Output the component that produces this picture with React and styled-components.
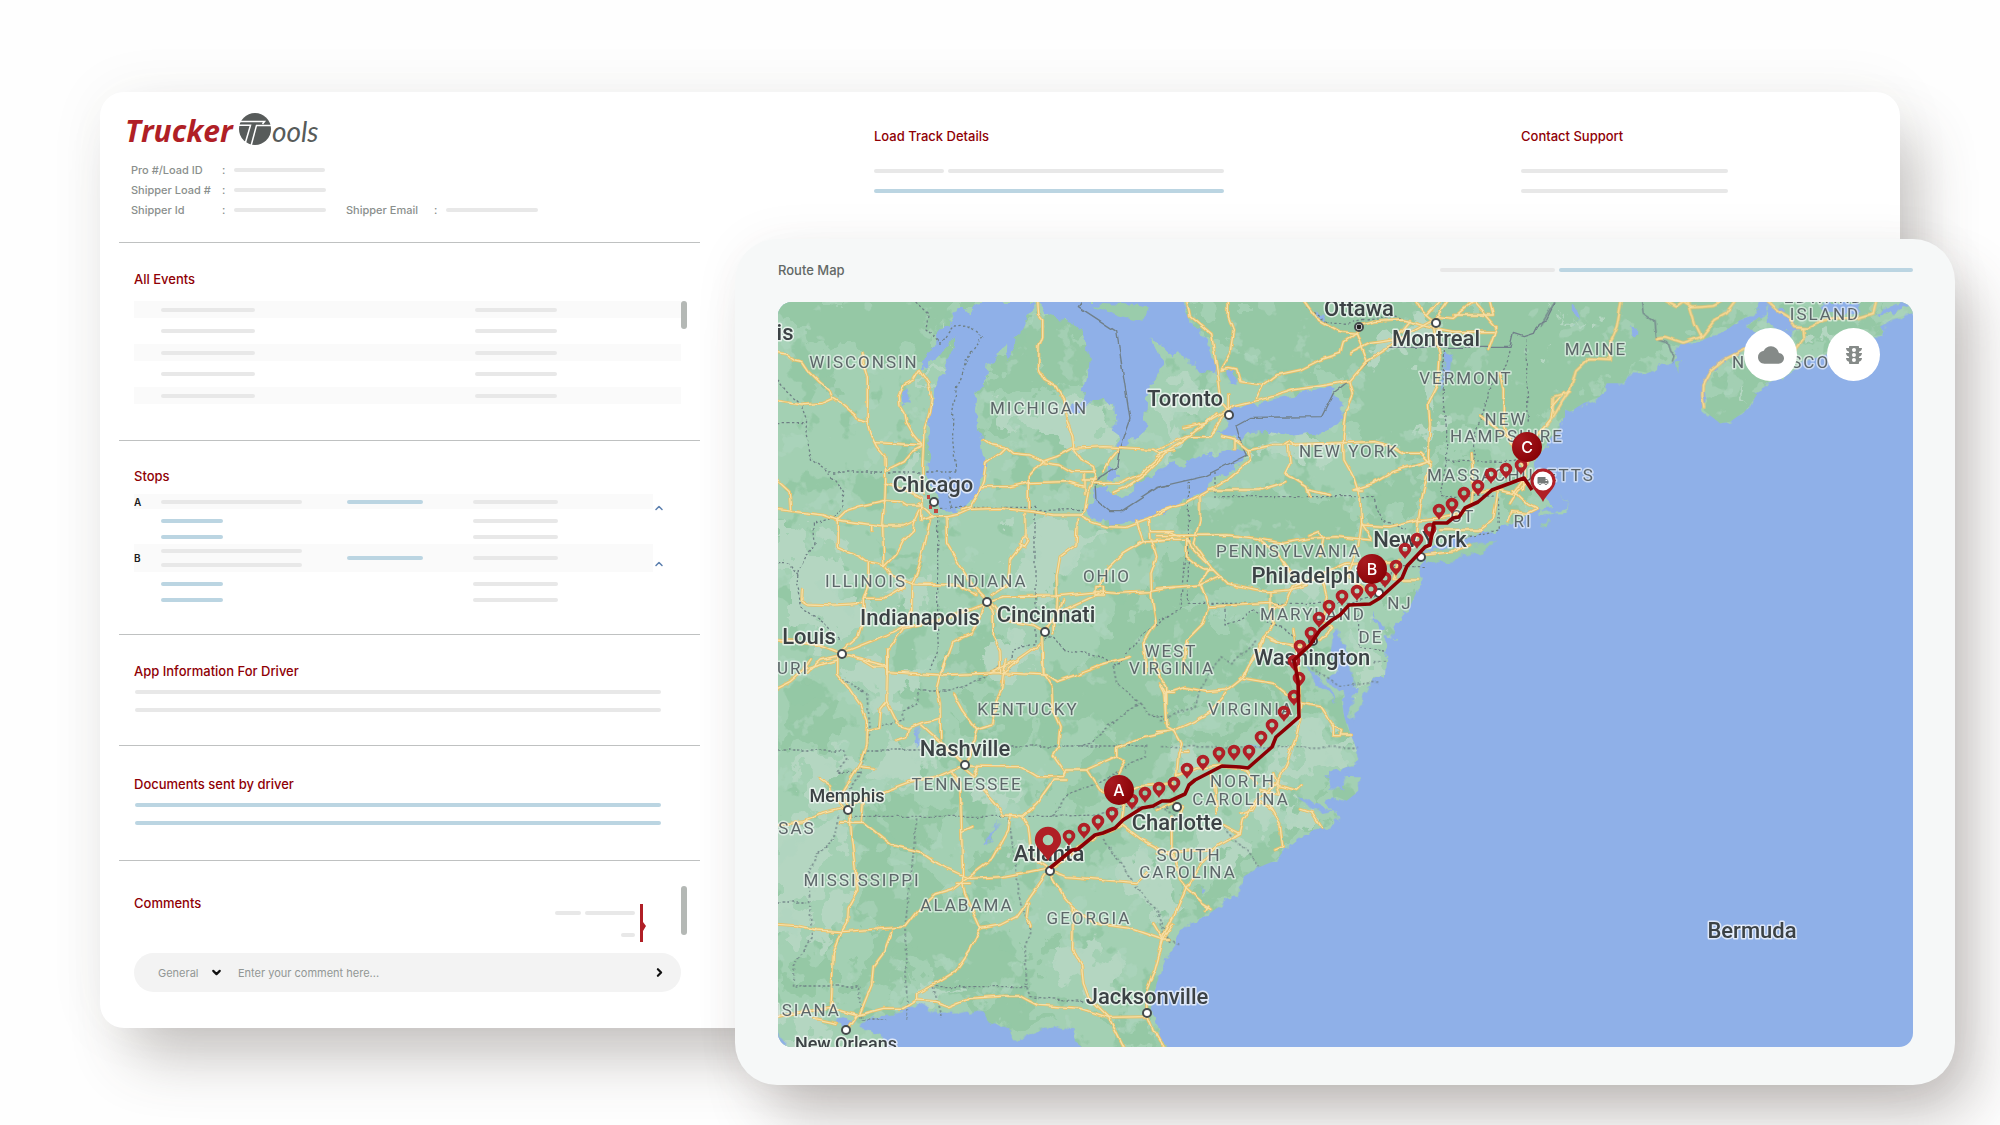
import React from 'react'
import styled, { createGlobalStyle } from 'styled-components'
import { MdCloud, MdTraffic, MdLocalShipping } from 'react-icons/md'
import { FiChevronUp, FiChevronDown, FiChevronRight } from 'react-icons/fi'

const GlobalStyle = createGlobalStyle`
    * {
        box-sizing: border-box;
    }
    body {
        margin: 0;
        background-color: #fefefe;
        font-family: Inter, "Liberation Sans", sans-serif;
    }
`

const Page = styled.div`
    min-height: 100vh;
    padding: 92px 45px 40px 100px;
    overflow: hidden;
    display: grid;
    grid-template-columns: 635fr 1165fr 55fr;
    grid-template-rows: 147px auto 57px;
    align-content: start;
`

const Dashboard = styled.main`
    grid-column: 1 / 3;
    grid-row: 1 / 3;
    display: grid;
    grid-template-columns: 635fr 1165fr;
    background-color: white;
    border-radius: 24px;
    box-shadow: 24px 36px 60px -8px rgba(74, 62, 56, 0.3), 0 0 60px rgba(74, 62, 56, 0.06);
`

const RouteCard = styled.section`
    grid-column: 2 / 4;
    grid-row: 2 / 4;
    padding: 0 42px 38px 43px;
    background-color: #f6f8f8;
    border-radius: 42px;
    box-shadow: 24px 36px 60px -8px rgba(74, 62, 56, 0.32), 0 0 50px rgba(74, 62, 56, 0.05);
`

const Left = styled.div`
    padding: 20px 35px 36px 19px;
`

const Brand = styled.header`
    padding: 0 0 22px 7px;
`

const Logo = styled.svg`
    display: block;
    width: 200px;
    height: 36px;
    margin-bottom: 12px;
    overflow: visible;
`

const MetaRow = styled.div`
    display: flex;
    align-items: center;
    height: 20px;
    padding-left: 5px;
    font-size: 11px;
    font-weight: 500;
    color: #8a8f8d;
`

const MetaLabel = styled.span`
    width: ${props => props.$width || "91px"};
`

const Colon = styled.span`
    width: 12px;
`

const Bar = styled.div`
    width: ${props => props.$width || "100%"};
    height: 4px;
    margin-right: ${props => props.$space || "0"};
    flex-shrink: 0;
    border-radius: 2px;
    background-color: ${props => props.$blue ? "#bbd5e2" : "#e8e8e8"};
`

const Section = styled.section`
    padding: ${props => props.$top || "26px"} 13px ${props => props.$bottom || "0"} 15px;
    border-top: 1px solid #bfc1c1;
`

const Title = styled.h2`
    margin: 0;
    font-size: 13px;
    line-height: 20px;
    font-weight: 500;
    color: #8f0005;
`

const Events = styled.div`
    display: flex;
    margin-top: 12px;
`

const EventList = styled.ul`
    flex: 1;
    margin: 0;
    padding: 0;
    list-style: none;
`

const EventRow = styled.li`
    display: grid;
    grid-template-columns: 314fr 206fr;
    align-items: center;
    height: 26px;
    padding-left: 27px;

    &:nth-child(odd) {
        height: 17px;
        background-color: #fafafa;
    }
`

const ScrollThumb = styled.div`
    width: 6px;
    height: ${props => props.$height};
    border-radius: 4px;
    background-color: #b4b8b5;
`

const Stops = styled.div`
    margin-top: 8px;
`

const StopHead = styled.div`
    display: flex;
    align-items: flex-start;
    height: ${props => props.$tall ? "28px" : "15px"};

    button {
        margin-top: ${props => props.$tall ? "14px" : "8px"};
    }
`

const StopBand = styled.div`
    width: 519px;
    height: 100%;
    display: grid;
    grid-template-columns: 27px 186px 126px 1fr;
    align-items: center;
    background-color: #fafafa;
    font-size: 10px;
    font-weight: 600;
    color: #1c1c1c;
`

const StopBody = styled.div`
    display: grid;
    grid-template-columns: 312px 1fr;
    row-gap: 12px;
    padding: 10px 0 5px 27px;
`

const Lines = styled.div`
    display: grid;
    row-gap: ${props => props.$gap || "14px"};
    margin-top: ${props => props.$top || "0"};
    padding: ${props => props.$inset ? "0 26px 0 1px" : "0"};
`

const ToggleButton = styled.button`
    display: flex;
    padding: 0;
    border: none;
    background: none;
    color: #5b7fae;
    cursor: pointer;
`

const CommentTop = styled.div`
    display: flex;
    align-items: flex-start;
    height: 67px;

    h2 {
        flex: 1;
        margin-top: 7px;
    }
`

const Thread = styled.div`
    display: flex;
    margin: 18px 35px 0 0;
`

const ThreadLines = styled.div`
    display: flex;
    flex-direction: column;
    align-items: flex-end;
    justify-content: space-between;
    padding: 7px 5px 5px 0;
`

const ThreadRow = styled.div`
    display: flex;
    gap: 4px;
`

const CommentForm = styled.form`
    display: flex;
    align-items: center;
    height: 39px;
    margin-right: 6px;
    padding: 0 15px 0 24px;
    border-radius: 20px;
    background-color: #f3f3f3;
`

const Select = styled.select`
    width: 52px;
    padding: 0;
    border: none;
    outline: none;
    appearance: none;
    background: none;
    font-family: inherit;
    font-size: 11px;
    color: #929795;
`

const Input = styled.input`
    flex: 1;
    min-width: 0;
    margin-left: 15px;
    padding: 0;
    border: none;
    outline: none;
    background: none;
    font-family: inherit;
    font-size: 11px;

    &::placeholder {
        color: #929795;
        opacity: 1;
    }
`

const SendButton = styled(ToggleButton)`
    color: #111;
`

const Summary = styled.div`
    display: grid;
    grid-template-columns: 647fr 379fr;
    align-content: start;
    padding: 34px 0 0 139px;
`

const SplitRow = styled.div`
    display: grid;
    grid-template-columns: ${props => props.$columns};
    column-gap: 4px;
`

const SummaryBlock = styled.div`
    width: ${props => props.$width};
`

const RouteHead = styled.div`
    display: flex;
    align-items: center;
    justify-content: space-between;
    height: 63px;
    padding-bottom: 2px;
`

const RouteTitle = styled.h2`
    margin: 0;
    font-size: 13px;
    line-height: 20px;
    font-weight: 500;
    color: #626866;
`

const MapBox = styled.div`
    position: relative;
    overflow: hidden;
    border-radius: 14px;
`

const MapSvg = styled.svg`
    display: block;
    width: 100%;
    height: auto;
    background-color: #8fb0e8;
    font-family: Roboto, "Liberation Sans", sans-serif;
`

const MapControls = styled.div`
    position: absolute;
    top: 26px;
    right: 33px;
    display: flex;
    gap: 30px;
`

const MapButton = styled.button`
    width: 53px;
    height: 53px;
    display: flex;
    align-items: center;
    justify-content: center;
    padding: 0;
    border: none;
    border-radius: 50%;
    background-color: white;
    color: #858a88;
    cursor: pointer;
`

const CityLabel = styled.text`
    font-size: ${props => props.$small ? "18px" : "22px"};
    font-weight: 500;
    fill: #3c4245;
    stroke: rgba(255, 255, 255, 0.7);
    stroke-width: 3px;
    stroke-linejoin: round;
    paint-order: stroke;
`

const StateLabel = styled.text`
    font-size: 17px;
    letter-spacing: 2px;
    fill: #5d6669;
    stroke: rgba(255, 255, 255, 0.55);
    stroke-width: 3px;
    stroke-linejoin: round;
    paint-order: stroke;
`

// The map is drawn in five tiles, each at three units to the pixel
const tiles = [
    {
        id: "nw",
        transform: "translate(770 290) scale(0.33333)",
        land: "M-60 -60H1215V1160H-60Z",
        water: [
            "M640 30L600 75L585 60L560 60L540 95L515 110L490 170L465 205L455 240L480 225L510 190L540 150L560 140L540 190L520 250L500 290L492 330L484 370L475 420L465 460L478 500L470 540L482 580L500 620L510 650L540 670L580 660L610 630L635 590L645 540L640 480L625 420L615 360L620 310L645 280L650 220L680 205L695 165L712 158L708 210L735 180L750 120L780 75L800 30Z",
            "M800 30L820 66L870 85L910 100L945 140L960 200L955 250L940 300L935 330L900 360L920 380L960 345L1000 322L1030 350L1035 420L1048 470L1075 465L1125 420L1128 330L1150 280L1175 230L1160 180L1135 140L1180 170L1215 205V30Z",
            "M1010 565L1015 530L1045 535L1050 560L1020 580Z",
            "M945 660L975 640L972 600L1000 585L1040 622L1090 602L1130 560L1215 515V655L1150 680L1110 690L1050 705L990 695L960 675Z",
            "M398 310L415 295L422 320L412 348L400 345Z",
        ],
        islands: ["M960 40L1060 45L1140 55L1115 95L1050 80L1010 65Z"],
        dark: [
            "M-10 0H620L540 90L470 170L400 160L330 200L240 160L150 180L100 110L-10 130Z",
            "M780 60L900 100L950 170L950 300L880 300L800 260L740 310L640 330L660 240L760 170Z",
            "M650 370L740 350L720 410L650 430Z",
            "M980 1000L1210 900V1160H900L1000 1080Z",
            "M540 1050L640 1010L680 1080L600 1150H540Z",
            "M130 250L200 290L160 310L110 280Z",
        ],
        light: [
            "M680 340L860 370L1000 320L1040 460L900 450L830 440L780 400L700 440Z",
            "M740 700L920 690L1000 740L880 850L830 920L740 900L720 800Z",
            "M24 720L120 720L190 780L250 870L270 1000L200 1060L100 980L24 1000Z",
            "M480 250L560 140L520 240L480 290Z",
            "M640 1090L760 1040L780 1150H660Z",
            "M400 480L460 500L450 600L400 560Z",
            "M360 900L460 880L520 960L430 980Z",
        ],
        borders: [
            "M24 270L50 305L95 345L110 385L108 430L125 510L165 540L195 570L222 610L215 650L190 685L130 700L135 760L85 840L80 890L95 950L160 1000L210 1050",
            "M175 546H558",
            "M24 398H105",
            "M440 36L475 70L468 120L510 160L550 108L590 105L638 140L590 210L560 290L548 370L548 450L558 546",
            "M540 560V652M510 652H795V662L945 658",
            "M503 680V1030L505 1080L480 1140",
            "M795 670V1060L730 1080L720 1140",
            "M24 818H55L85 855",
            "M825 1050L850 1040L880 1080L980 1095L1040 1130L1110 1040L1170 1000L1200 970",
        ],
        frontier: ["M935 36L925 50L1040 125L1080 385L1050 470L1040 530L975 575L978 630L1020 665H1055L1170 590L1200 585"],
        roads: [
            "M20 188L50 192L75 210L95 215L115 245L150 280L180 305L188 325L220 345L255 375L265 390L292 398L300 430L320 470L345 500L347 560L345 620L338 710L342 830",
            "M20 333L95 345L155 340L188 325",
            "M275 188L280 220L292 260V398",
            "M448 240L430 270L402 285L388 320L390 345L405 370L410 400L430 435L455 465",
            "M448 240L475 280L485 320L478 370L462 420L460 470L457 540L460 610",
            "M316 458L455 465M455 470L425 485L400 515L350 540",
            "M20 570L58 605L62 658M20 658L160 675L200 690L340 708H400L440 690",
            "M200 690L225 665L270 648L340 632L390 635L410 648H455",
            "M345 582L420 605L455 625V690L490 680",
            "M445 640L470 660L490 680M450 660L435 690",
            "M202 690V770L270 800L290 815L330 822L342 830",
            "M480 680H530L570 672L600 658L690 655L790 665L850 675H930",
            "M575 660L600 650L625 610L640 570L648 520L690 490L710 470",
            "M640 447L665 465L710 472L730 490L780 495L815 512",
            "M635 590H720L775 578L890 575L940 588",
            "M775 655V560L815 515L860 500L905 475L1000 470L1150 478L1170 490L1210 482",
            "M803 30L806 75L818 90V140L807 170L806 240L822 270L858 290L880 330L890 390L908 440L912 480L935 510L970 530L975 560L955 600L945 660L930 678",
            "M815 518L870 525L905 545H975M945 550V610M940 570H975",
            "M970 580H1050L1110 555L1170 500M1000 545L1020 510L1045 480M1030 607L1070 590L1130 550L1190 490",
            "M930 678L960 695L1010 710L1070 712L1130 690L1210 650",
            "M1100 695L1120 755H1160M1140 725H1210M1135 690L1140 755L1210 745",
            "M922 690L918 765L870 800L860 860L862 925L860 970L825 1025",
            "M1120 755L1060 790L1015 835L990 885M1145 750L1160 800L1143 850L1145 920L1158 1000L1120 1060L1130 1150",
            "M650 935L700 920L860 918L985 905L1040 910L1140 905L1210 892",
            "M528 680L530 760L560 810L610 890L645 925",
            "M765 670V738M755 765L720 810L715 880L665 915",
            "M480 690L470 740L455 800L440 850L425 882L560 885L620 915",
            "M342 830L365 855L425 882V960L400 1010L350 1035L225 1085",
            "M342 830L380 790L400 750L430 720L435 690",
            "M295 820V880L280 925V990L265 1040L220 1080",
            "M97 900L95 930L115 942L190 945L275 940",
            "M280 925H340L400 890",
            "M20 1050L150 1065L215 1090L350 1125V1150M215 1095L150 1110L110 1150",
            "M650 940L600 960L490 995L400 1015L350 1085V1140",
            "M645 940L605 1030L550 1055L515 1150",
            "M655 940L670 970V1040L690 1080L692 1150",
            "M660 935L700 990L790 1005L825 1025",
            "M860 970L880 930M870 965L990 910M815 1030L820 1150M810 1060L740 1110L660 1150M850 1030V1000",
            "M305 708V725",
            "M762 738L775 752L765 768L750 762L752 745Z",
            "M975 890H1003V915H975Z",
        ],
    },
    {
        id: "n",
        transform: "translate(1160 290) scale(0.33333)",
        land: "M-20 -60H1215V395L1175 440L1150 470L1120 520L1150 560L1130 600L1180 650L1110 660L1080 680L1060 700L1000 722L930 740L840 760L800 790L780 822L785 870L750 950L710 1010L700 1048L680 1040L640 960L655 1020L680 1080L675 1160H-20Z",
        water: [
            "M-5 30H70L90 100L130 140L150 190L165 215L170 255L130 240L90 225L50 180L-5 150Z",
            "M-5 545L40 530L110 505L150 492L230 480L258 492L240 520L165 565L120 610L60 640L-5 670Z",
            "M175 430L205 400L190 370L250 345L330 330L420 310L500 290L535 290L515 310L550 340L545 400L500 425L400 440L330 425L260 430L235 455L215 440Z",
            "M195 232L225 240L230 285L200 280Z",
            "M850 180L875 190L862 260L845 300L852 240Z",
            "M530 1010L545 1040L530 1090L550 1160H530L520 1080Z",
            "M470 60L500 90L490 100Z",
        ],
        islands: ["M790 795L850 778L930 762L1010 755L960 785L880 808L800 822Z", "M1150 700H1160V712H1150Z"],
        dark: [
            "M90 30H1210V230L1130 300L1100 420H900L880 500L800 520L700 500L640 440L570 400L560 330L600 280L560 270L420 230L300 240L240 180L180 160L130 100Z",
            "M90 640L250 620L560 620L640 680L600 740L520 800L400 860L260 880L130 860L60 960L-10 1040V820L60 740Z",
            "M620 560L780 540L780 620L700 650L620 600Z",
            "M-10 980L120 960L180 1000L100 1150H-10Z",
            "M860 530L920 520L900 640L850 600Z",
            "M700 930L760 880L740 960L700 1000Z",
            "M1080 560L1140 580L1100 660L1040 690L1020 620Z",
        ],
        light: [
            "M100 270L180 300L170 360L80 380L20 420L-10 460V340Z",
            "M270 440L380 430L560 450L540 490L450 500L290 490Z",
            "M700 100L830 110L820 160L760 170L700 210L650 240L620 220Z",
            "M420 860L500 830L620 840L560 910L480 930L420 930Z",
            "M590 1000L640 1050L675 1100V1160H600L580 1080Z",
            "M800 300L840 320L830 440L800 480Z",
            "M0 420L80 430L50 480L0 510Z",
        ],
        borders: [
            "M165 545V620H640L650 650L670 690L740 720",
            "M85 575V940H570L640 920L690 860L700 830H800",
            "M850 180V340L860 420V510L1060 515L1100 500",
            "M1097 150L1105 400M1050 180L1040 220L995 280L975 350L945 430L942 510",
            "M860 510L840 620L1015 618L1018 720L900 745",
            "M195 945V1005L240 990L280 960L340 1000L380 1020L420 1060L480 1120",
            "M595 960L597 1070L675 1080",
            "M85 760L70 850L60 960L0 990",
            "M440 50L500 95L560 100L620 90L700 80L800 110",
        ],
        frontier: ["M-10 592L130 560L260 495L240 450L228 405L270 382L485 380L520 310L570 270L640 200L690 172H1050L1060 130L1090 140L1120 130L1135 100L1160 90L1185 40"],
        roads: [
            "M80 30L90 80L155 135L165 200L175 260L185 340L205 365",
            "M205 30V80L220 120L210 190L180 240L205 235L230 240L240 275L310 285L350 255L420 240L480 210L540 190L550 155L598 120",
            "M-10 500L60 460L110 420L160 385L220 350L320 325L400 300L500 285L570 272L620 215L690 170L730 140L820 90",
            "M-10 480L80 440L150 440L200 360M70 415L140 400L170 370M205 310V370M310 285L290 325",
            "M430 30L470 85L540 125L590 130L620 210",
            "M570 190L630 160L700 150L750 90M590 110L640 95L730 90L800 110L880 125H1000",
            "M765 30L790 70L820 95L865 30M840 30L800 75M820 95L840 200L835 280L805 340L810 400L805 500L810 530L790 600L775 690L770 740",
            "M830 80L880 85L940 36L1010 115M880 75H1000L990 36M1010 110L985 180",
            "M180 440L225 450L265 480L340 465L450 462L640 455L700 470L730 490H780L810 520M225 450V475M370 465L390 450L410 468",
            "M265 480L270 510L200 570L150 600L80 640L-10 665",
            "M570 275L580 310L560 360L550 440L552 510L580 560L600 620L605 700L595 770",
            "M385 465L390 520L375 550L440 590L450 620",
            "M810 510L700 545L640 580L580 600H610",
            "M145 600H300L380 575M445 600L510 615",
            "M120 620V690L100 760L150 830L120 880L145 950L130 1000L80 1050L70 1150",
            "M-10 725H20L60 740M-10 737L200 735L290 745L370 760L450 745L530 740L635 750",
            "M-10 748H80L100 780L180 860L200 880L320 905L390 900L440 885",
            "M-10 895L120 885L180 860M80 745V800L130 840H160",
            "M605 705L690 710L770 690L830 685L900 670L935 640L940 580L935 490",
            "M605 700L635 745M450 735L475 725L490 745L480 800",
            "M290 745L350 790L400 860",
            "M145 950L330 940L370 950M330 905V960L345 1000L310 1040L255 1150M330 960L380 940L400 890L490 850L560 820L700 815",
            "M840 720H960L1000 690L1015 600M790 795L880 785L930 765",
            "M1050 640L1075 600L1100 580M1060 600L1100 640L1130 655L1100 670L1055 665L1045 690M940 610L1015 600L1060 610L1090 570",
            "M1020 250L1030 300V400L1060 480L1095 530L1090 600",
            "M960 380L1000 410L1040 440M1210 310L1175 350L1170 390L1130 440L1105 520",
            "M485 860L500 920L490 980M320 1040L360 1060L440 1070M490 1000L520 1010L480 1050M720 810L700 870H775M590 770L560 860L620 900",
        ],
    },
    {
        id: "ne",
        transform: "translate(1540 230) scale(0.33333)",
        land: "M-50 100H690L660 240L600 270L560 300L500 325L420 345L400 395L370 400L330 430L280 420L250 460L200 460L180 500L130 520L90 545L60 530L40 570L10 620L-50 700ZM690 235L620 290L640 305L700 300L770 300L745 340L610 360L560 390L510 430L490 480L490 540L540 580L570 575L620 540L660 480L700 450L760 430L780 400L870 370L960 320L1035 315L1020 290L1060 265L1130 250V100H690ZM0 790L10 845L40 850L75 835L80 820L60 790L80 815V850L40 850L5 865Z",
        water: [
            "M860 216H960L950 250L880 250L840 235Z",
            "M690 225L750 260L780 300L720 300L680 280Z",
            "M1010 250L1080 216L1120 210L1060 250Z",
            "M100 230L115 245L110 275L95 250Z",
            "M270 295L300 300L300 315L280 320Z",
        ],
        islands: ["M405 400H425L410 418Z"],
        dark: [
            "M-50 100H690L640 240L560 290L480 320L400 360L300 420L180 460L90 540L-50 600Z",
            "M520 430L700 370L700 440L620 540L560 575L490 540Z",
            "M640 300L700 290L800 350L960 300L1060 230L960 260L800 216Z",
        ],
        light: [
            "M90 260L60 290L50 275Z",
            "M150 270L175 280L150 305Z",
            "M800 300L870 290L860 330L790 340Z",
            "M590 490L640 460L600 510Z",
            "M0 380L30 360L20 400Z",
        ],
        borders: [],
        frontier: ["M305 216L310 250L345 275L350 325L380 335L390 365L405 380L400 398", "M45 216L0 290"],
        roads: [
            "M245 210L230 290L212 330V388L145 385L108 420L90 480L70 510L40 560L0 610",
            "M90 485L40 500L38 550",
            "M350 325L375 320L430 338L485 320L525 270L560 250L590 210",
            "M375 210L410 228L430 214L455 230L520 225L550 210M450 230L465 280L485 320",
            "M680 210L720 245L745 260L765 292L800 295L850 270L950 265L1000 250L1010 210",
            "M787 295L790 330L770 355M620 355L560 385L510 425L488 465L487 500L492 535",
        ],
    },
    {
        id: "sw",
        transform: "translate(770 660) scale(0.33333)",
        land: "M-60 -40H1215V850L1200 870L1175 930L1160 970L1150 1010L1140 1060L1165 1100L1195 1180H-60Z",
        water: [
            "M270 1100L300 1070L400 1052L440 1030L500 1060L560 1060L620 1050L660 1090L710 1105L740 1140L800 1120L850 1090L900 1110L945 1180H370L330 1130Z",
            "M195 1080L240 1065L258 1085L220 1105Z",
            "M-10 1110L30 1120L60 1180H-10Z",
            "M640 550L690 480L680 500L650 555Z",
            "M440 200L450 240L440 260Z",
        ],
        islands: [],
        dark: [
            "M40 110L140 90L230 170L220 240L120 260L40 200Z",
            "M860 80L1000 20L1210 40V460L1060 420L950 460L860 450L900 340L1040 240L960 180L880 160Z",
            "M540 140L700 110L820 200L760 250L640 230Z",
            "M320 530L420 600L540 680L500 800L420 900L360 1000L260 980L300 820L260 650Z",
            "M500 720L650 800L740 900L760 970H520L460 900L400 960L420 800Z",
            "M620 540L740 600L700 700L620 650Z",
            "M330 400L440 420L540 460L460 540L380 520Z",
            "M24 1000L180 1000L240 960L200 850L100 900L24 940Z",
            "M780 820L900 820L880 880L780 900Z",
            "M520 1000L760 1000L860 1080L740 1130L640 1060Z",
            "M1000 1060L1130 1080L1170 1160H1080Z",
        ],
        light: [
            "M60 270L260 280L210 400L200 560L120 700L90 860L24 820V520L140 460Z",
            "M240 20L480 20L420 130L360 180L290 110Z",
            "M360 240L500 260L500 340L340 370L300 300Z",
            "M840 870L1020 850L1080 960L1000 1020L880 990Z",
            "M1060 560L1210 600V740L1100 700Z",
            "M700 540L760 560L740 620L700 600Z",
            "M430 960L480 940L560 1000L460 1010Z",
            "M620 380L760 350L700 440L620 440Z",
            "M160 700L230 720L190 860L140 840Z",
            "M60 1080L200 1110L180 1160H60Z",
        ],
        borders: [
            "M24 270H220L230 300L200 337H270M290 270H440L720 258H1130L1125 290L1070 320L980 370L880 410L850 468",
            "M240 469H850L980 465L1060 440L1200 445",
            "M440 475L420 680L405 800L412 1085",
            "M715 475L735 600L750 720L782 810L765 860L770 980L780 1010L940 1025",
            "M770 980H490L515 1075",
            "M24 726H110",
            "M205 470L190 540L140 580L115 650L125 830L70 920L68 978H265L275 1080H350",
            "M205 50L290 100L300 200L270 340L230 400",
            "M320 200L400 180L400 150L440 130L450 90L540 90L600 70L640 50L690 20",
            "M1030 20L1040 70L1110 130L1060 160L960 250L920 260M1110 130L1140 170L1200 165",
            "M1000 540L1100 680L1160 750L1200 850",
        ],
        frontier: [],
        roads: [
            "M20 85L60 65L100 30L120 0M100 30L200 0",
            "M200 -10V40L240 90L275 140L290 180L288 250L270 310L240 360L215 400L235 440",
            "M350 -30L352 35L510 45L690 38L830 45L860 65L920 45L1000 15L1080 -10M280 0L310 18H350M352 -10V30L350 125L330 150L325 205L290 215",
            "M350 125L385 195L415 205L450 190L510 175M415 205L410 230L378 240M450 190L500 235L560 290L585 315",
            "M530 -10L510 45L500 80L510 130L512 235",
            "M550 100L580 155L620 210L665 195L680 120L695 90L700 40L745 0M700 40L710 0M620 210L600 290L585 315",
            "M820 -20L822 45L845 80L848 150L870 200L865 260L850 285L885 335",
            "M235 440L160 460L100 485L20 495M235 440L340 395L420 365L500 350L545 330L585 318",
            "M585 318L690 320H750L800 350H880L890 330H950L1040 290V265L1120 230L1210 210",
            "M625 320L610 350L585 330M540 330L570 370L572 420L575 520L578 660",
            "M640 390L680 435L700 465L760 468L800 430L850 360L890 360",
            "M720 470L715 510L665 600L585 660L545 690L495 705L440 755L405 800L350 805L215 815L140 810L80 797L20 793",
            "M755 470L775 500L785 590L830 620M575 515L608 500",
            "M240 450L245 540L255 620L262 690L232 745L230 790L215 815L190 880L187 960L183 1045",
            "M210 487H280L365 555L450 575L500 610L575 645L600 655L700 650L830 625",
            "M280 430L275 485M150 355L180 375L185 405L215 440M270 320L312 325",
            "M560 670H600M578 665L585 700L632 805L600 870L555 935L490 975L440 1000V1020L500 1025L540 1040L600 1015L700 1008H750L800 1035L930 1045L1015 1072L1130 1070",
            "M632 805L690 795L740 770L775 720L830 640M775 730L770 770L782 800",
            "M840 640L880 710L910 745L908 870L935 920L940 970L955 1010L1015 1070L1065 1170",
            "M840 630L890 650L1100 668L1130 640M910 745L975 790L1080 805L1180 840L1210 790",
            "M1180 840L1155 930L1130 990V1060L1150 1110L1190 1170",
            "M440 1020L400 1045H340L265 1065L240 1100M20 1070L100 1055L180 1045L260 1065M365 815L340 880L310 920L305 975L270 1060M130 1075L200 1090",
            "M840 630L960 540L1050 500L1060 430M1050 490L1110 535L1210 590",
            "M950 330L990 390L1040 410L1100 380L1210 370",
            "M1150 -10L1170 50L1190 80V190M1040 290L1065 300L1045 340M1190 100H1210",
        ],
    },
    {
        id: "s",
        transform: "translate(1160 640) scale(0.33333)",
        land: "M-20 -30H675V50L640 110L610 170L580 240L570 220L590 150L580 120L560 150L545 180L550 220L560 255L575 290L590 330L600 370L560 380L500 405L540 410L600 412V450L560 482L530 470L500 480L540 540L500 560L440 580L380 620L350 660L300 680L250 710L230 760L190 790L150 820L90 850L50 890L30 930L0 960V1010H-20Z",
        water: [
            "M520 -20L510 50L540 100L500 110L550 170L580 150L570 60L560 40L540 -20Z",
            "M440 80L500 130L530 190L480 140Z",
            "M500 405L560 400L540 440L560 455L510 445Z",
            "M410 470L470 490L520 510L490 520L440 495Z",
            "M250 310L330 330L290 325Z",
            "M130 740L145 745L135 760Z",
        ],
        islands: ["M-10 1170L20 1225H-10Z"],
        dark: [
            "M-20 -30H260L200 100L60 190L-20 230Z",
            "M280 60L400 90L480 200L400 260L340 200L260 180Z",
            "M60 240L280 260L240 310L60 310Z",
            "M380 560L480 540L420 590L360 640L300 660Z",
            "M260 600L330 560L350 640L280 680L230 690L220 760L150 800L100 740Z",
            "M460 440L520 480L480 500Z",
        ],
        light: [
            "M430 220L520 290L590 330L540 380L440 390L360 430L330 540L260 540L300 430L400 330Z",
            "M80 560L220 550L250 640L160 700L90 660Z",
            "M600 20L670 20L630 100L590 200L580 100Z",
            "M0 740L60 760L30 860L0 880Z",
            "M50 330L120 340L100 400L50 400Z",
            "M400 480L460 520L440 580L390 560Z",
        ],
        borders: [
            "M0 320L590 322",
            "M0 505L60 530L100 540M190 560L300 680",
            "M0 240L105 200L120 150L180 50L215 75L290 0",
            "M455 85L540 140L660 125M640 65H675",
            "M0 850L15 890L60 915",
        ],
        frontier: [],
        roads: [
            "M15 160L75 142L140 155L200 150L250 110L300 20L310 -10",
            "M0 130L15 160L22 260L45 275L65 310L55 340L50 410",
            "M-10 275L45 270L100 245L150 215L200 160M60 335H85",
            "M250 115L340 130L390 170L425 190L480 200L520 260L545 270L540 290H520V255M545 285H575",
            "M425 190L420 240L405 300L380 370L350 430L290 480L250 540L240 580L170 620L130 660L80 740L40 830L10 890L0 930",
            "M50 410L110 385L180 378L260 390L290 430M330 430L410 450L425 435M340 400L360 460L300 450",
            "M-10 510L35 490L70 500L60 520",
            "M150 400L165 440L170 520M330 500L360 550L368 620L345 630M420 505L455 515L485 562",
            "M290 480L335 510M190 555L240 580M240 520L280 510L290 490",
            "M35 530V620L60 720L80 745L130 790L155 805M135 810L150 795",
            "M-10 640L100 632L165 625M-20 850L10 900H28",
            "M-10 1180L15 1225",
            "M330 0L400 20M400 -30L415 60L420 190",
        ],
    },
]

const cities = [
    { name: "Chicago", x: 933, y: 492, dot: [934, 502] },
    { name: "Indianapolis", x: 920, y: 625, dot: [987, 602] },
    { name: "Cincinnati", x: 1046, y: 622, dot: [1045, 632] },
    { name: "Louis", x: 809, y: 644, dot: [842, 654] },
    { name: "Toronto", x: 1185, y: 406, dot: [1229, 415] },
    { name: "Ottawa", x: 1359, y: 316, dot: [1359, 327], capital: true },
    { name: "Montreal", x: 1436, y: 346, dot: [1436, 323] },
    { name: "New York", x: 1420, y: 547, dot: [1421, 557] },
    { name: "Philadelphia", x: 1312, y: 583, dot: [1379, 593] },
    { name: "Washington", x: 1312, y: 665, dot: [1313, 641], capital: true },
    { name: "Nashville", x: 965, y: 756, dot: [965, 765] },
    { name: "Memphis", x: 847, y: 802, dot: [848, 810], small: true },
    { name: "Atlanta", x: 1049, y: 861, dot: [1050, 871] },
    { name: "Charlotte", x: 1177, y: 830, dot: [1177, 807] },
    { name: "Jacksonville", x: 1147, y: 1004, dot: [1147, 1013] },
    { name: "New Orleans", x: 846, y: 1050, dot: [846, 1030], small: true },
    { name: "Bermuda", x: 1752, y: 938 },
    { name: "is", x: 785, y: 340 },
]

const states = [
    ["WISCONSIN", 864, 368],
    ["MICHIGAN", 1039, 414],
    ["ILLINOIS", 866, 587],
    ["INDIANA", 987, 587],
    ["OHIO", 1107, 582],
    ["WEST", 1171, 657],
    ["VIRGINIA", 1172, 674],
    ["URI", 793, 674],
    ["KENTUCKY", 1028, 715],
    ["TENNESSEE", 967, 790],
    ["SAS", 797, 834],
    ["MISSISSIPPI", 862, 886],
    ["ALABAMA", 967, 911],
    ["GEORGIA", 1089, 924],
    ["ISIANA", 808, 1016],
    ["NEW YORK", 1349, 457],
    ["VERMONT", 1466, 384],
    ["NEW", 1506, 425],
    ["HAMPSHIRE", 1507, 442],
    ["MASSACHUSETTS", 1511, 481],
    ["CT", 1463, 522],
    ["RI", 1523, 527],
    ["PENNSYLVANIA", 1289, 557],
    ["MARYLAND", 1313, 620],
    ["NJ", 1400, 609],
    ["DE", 1371, 643],
    ["VIRGINIA", 1251, 715],
    ["NORTH", 1243, 787],
    ["CAROLINA", 1241, 805],
    ["SOUTH", 1189, 861],
    ["CAROLINA", 1188, 878],
    ["MAINE", 1596, 355],
    ["EDWARD", 1824, 303],
    ["ISLAND", 1825, 320],
    ["NOVA SCOTIA", 1797, 368],
]

const route = "1050,868 1072,850 1078,849 1095,835 1103,833 1115,828 1123,820 1142,808 1153,806 1162,801 1170,801 1185,794 1189,785 1195,780 1222,766 1240,767 1248,768 1272,747 1276,737 1299,717 1298,680 1294,660 1310,645 1320,630 1332,620 1340,615 1349,605 1370,604 1380,598 1402,578 1407,566 1425,547 1430,545 1434,523 1447,523 1453,518 1459,517 1465,508 1478,502 1492,490 1524,478 1532,490"

const pings = [
    [1069, 836], [1084, 829], [1098, 821], [1112, 813], [1132, 800], [1145, 793], [1159, 788],
    [1174, 783], [1187, 769], [1203, 761], [1219, 753], [1234, 751], [1249, 751], [1261, 737],
    [1272, 725], [1284, 712], [1294, 696], [1299, 678], [1294, 661], [1300, 646], [1311, 633],
    [1319, 618], [1329, 606], [1342, 596], [1357, 591], [1371, 589], [1385, 578], [1396, 566],
    [1405, 549], [1417, 539], [1430, 529], [1439, 510], [1452, 504], [1464, 493], [1478, 486],
    [1491, 474], [1506, 469], [1521, 465],
]

const stopBadges = [
    ["A", 1119, 790],
    ["B", 1372, 569],
    ["C", 1527, 447],
]

const Shapes = ({ kind, ...rest }) => (
    <g {...rest}>
        {tiles.map(tile => (
            <g key={tile.id} transform={tile.transform}>
                {[].concat(tile[kind]).map(d => <path key={d} d={d} />)}
            </g>
        ))}
    </g>
)

const Pin = ({ x, y, scale = 1 }) => (
    <path
        transform={`translate(${x} ${y}) scale(${scale})`}
        fill="#b01f26"
        fillRule="evenodd"
        d="M0 9.5C-1.4 6.5-6 3.6-6 0A6 6 0 1 1 6 0C6 3.6 1.4 6.5 0 9.5ZM0-2.4A2.4 2.4 0 1 0 0 2.4A2.4 2.4 0 1 0 0-2.4Z"
    />
)

const RouteMap = () => (
    <MapSvg viewBox="778 302 1135 745" role="img" aria-label="Route map">
        <defs>
            <filter id="coast" filterUnits="userSpaceOnUse" x="760" y="280" width="1180" height="790" colorInterpolationFilters="sRGB">
                <feTurbulence type="fractalNoise" baseFrequency="0.09" numOctaves="3" seed="4" />
                <feDisplacementMap in="SourceGraphic" scale="12" xChannelSelector="R" yChannelSelector="G" />
            </filter>
            <filter id="rough" filterUnits="userSpaceOnUse" x="760" y="280" width="1180" height="790" colorInterpolationFilters="sRGB">
                <feTurbulence type="fractalNoise" baseFrequency="0.035" numOctaves="4" seed="9" />
                <feDisplacementMap in="SourceGraphic" scale="70" xChannelSelector="R" yChannelSelector="G" />
            </filter>
            <filter id="wiggle" filterUnits="userSpaceOnUse" x="760" y="280" width="1180" height="790" colorInterpolationFilters="sRGB">
                <feTurbulence type="fractalNoise" baseFrequency="0.07" numOctaves="2" seed="2" />
                <feDisplacementMap in="SourceGraphic" scale="5" xChannelSelector="R" yChannelSelector="G" />
            </filter>
            <filter id="speckle" filterUnits="userSpaceOnUse" x="760" y="280" width="1180" height="790" colorInterpolationFilters="sRGB">
                <feTurbulence type="fractalNoise" baseFrequency="0.035" numOctaves="4" seed="21" />
                <feColorMatrix values="0 0 0 0 0.69  0 0 0 0 0.835  0 0 0 0 0.75  20 0 0 0 -12.8" />
            </filter>
            <filter id="woods" filterUnits="userSpaceOnUse" x="760" y="280" width="1180" height="790" colorInterpolationFilters="sRGB">
                <feTurbulence type="fractalNoise" baseFrequency="0.028" numOctaves="4" seed="33" />
                <feColorMatrix values="0 0 0 0 0.58  0 0 0 0 0.784  0 0 0 0 0.647  22 0 0 0 -13" />
            </filter>
            <clipPath id="landClip">
                {tiles.map(tile => <path key={tile.id} d={tile.land} transform={tile.transform} />)}
            </clipPath>
            <radialGradient id="badge" cx="0.25" cy="0.25" r="0.9">
                <stop offset="0" stopColor="#a81a20" />
                <stop offset="1" stopColor="#870004" />
            </radialGradient>
        </defs>
        <g filter="url(#coast)">
            <Shapes kind="land" fill="#a3d0b3" />
        </g>
        <g clipPath="url(#landClip)">
            <rect x="778" y="302" width="1135" height="745" filter="url(#woods)" />
            <Shapes kind="dark" fill="#95c8a5" filter="url(#rough)" />
            <Shapes kind="light" fill="#b4d6c1" filter="url(#rough)" />
            <rect x="778" y="302" width="1135" height="745" filter="url(#speckle)" opacity="0.55" />
        </g>
        <g filter="url(#coast)">
            <Shapes kind="water" fill="#8fb0e8" />
            <Shapes kind="islands" fill="#9accab" />
        </g>
        <g filter="url(#wiggle)" fill="none" strokeLinejoin="round">
            <Shapes kind="borders" stroke="#6f8085" strokeWidth="4" strokeDasharray="7 7" />
            <Shapes kind="frontier" stroke="#71808a" strokeWidth="4" />
            <Shapes kind="roads" stroke="#e8c069" strokeWidth="9" strokeLinecap="round" />
            <Shapes kind="roads" stroke="#f5dfa6" strokeWidth="4" strokeLinecap="round" />
        </g>
        <g fill="#c2453f">
            <rect x="927" y="495" width="3" height="4" />
            <rect x="931" y="498" width="3" height="3" />
            <rect x="929" y="505" width="3" height="4" />
            <rect x="934" y="509" width="4" height="4" />
        </g>
        {cities.filter(city => city.dot).map(city => (
            <g key={city.name} transform={`translate(${city.dot[0]} ${city.dot[1]})`}>
                <circle r="4" fill="white" stroke="#454b4d" strokeWidth="2" />
                {city.capital && <circle r="2.4" fill="#222" />}
            </g>
        ))}
        <g textAnchor="middle">
            {states.map(([name, x, y]) => <StateLabel key={`${name}-${y}`} x={x} y={y}>{name}</StateLabel>)}
            {cities.map(city => (
                <CityLabel key={city.name} x={city.x} y={city.y} $small={city.small}>{city.name}</CityLabel>
            ))}
        </g>
        {pings.map(([x, y]) => <Pin key={`${x}-${y}`} x={x} y={y} scale={1.05} />)}
        <Pin x={1048} y={840} scale={2.2} />
        <polyline points={route} fill="none" stroke="#8b0004" strokeWidth="3.6" strokeLinejoin="round" />
        <path transform="translate(1543 481) scale(2.1)" fill="#b01f26" d="M0 10C-1.4 6.5-6 3.6-6 0A6 6 0 1 1 6 0C6 3.6 1.4 6.5 0 10Z" />
        <circle cx="1543" cy="481" r="9.5" fill="white" />
        <MdLocalShipping x="1537" y="475" size="12" color="#757b79" />
        {stopBadges.map(([name, x, y]) => (
            <g key={name} transform={`translate(${x} ${y})`}>
                <circle r="15" fill="url(#badge)" />
                <text y="6" fontSize="16" fontFamily="Inter, sans-serif" fontWeight="500" fill="white" textAnchor="middle">{name}</text>
            </g>
        ))}
    </MapSvg>
)

const TruckerLogo = () => (
    <Logo viewBox="126 112 200 36" role="img" aria-label="Trucker Tools">
        <text x="125" y="142" fontFamily="Open Sans, sans-serif" fontSize="30" fontWeight="700" fontStyle="italic" fill="#b01f26">Trucker</text>
        <circle cx="255" cy="129" r="16" fill="#575b5a" />
        <path d="M240 121.6H264.5L262.5 124M238.5 125.2H250.5L245 144M271 125.4H256.5L251 146" fill="none" stroke="white" strokeWidth="1.5" />
        <text x="272" y="142" fontFamily="Lato, sans-serif" fontSize="28" fontWeight="400" fontStyle="italic" fill="#575b5a">ools</text>
    </Logo>
)

const App = () => {
  return (
      <Page>
          <GlobalStyle />

          <Dashboard>
              <Left>
                  <Brand>
                      <TruckerLogo />
                      <MetaRow>
                          <MetaLabel>Pro #/Load ID</MetaLabel><Colon>:</Colon><Bar $width="91px" />
                      </MetaRow>
                      <MetaRow>
                          <MetaLabel>Shipper Load #</MetaLabel><Colon>:</Colon><Bar $width="92px" />
                      </MetaRow>
                      <MetaRow>
                          <MetaLabel>Shipper Id</MetaLabel><Colon>:</Colon><Bar $width="92px" $space="20px" />
                          <MetaLabel $width="88px">Shipper Email</MetaLabel><Colon>:</Colon><Bar $width="92px" />
                      </MetaRow>
                  </Brand>

                  <Section $bottom="36px">
                      <Title>All Events</Title>
                      <Events>
                          <EventList>
                              {[1, 2, 3, 4, 5].map(row => (
                                  <EventRow key={row}>
                                      <Bar $width="94px" />
                                      <Bar $width="82px" />
                                  </EventRow>
                              ))}
                          </EventList>
                          <ScrollThumb $height="28px" />
                      </Events>
                  </Section>

                  <Section $top="25px" $bottom="27px">
                      <Title>Stops</Title>
                      <Stops>
                          <StopHead>
                              <StopBand>
                                  A
                                  <Bar $width="141px" />
                                  <Bar $blue $width="76px" />
                                  <Bar $width="85px" />
                              </StopBand>
                              <ToggleButton type="button" aria-label="Collapse stop A"><FiChevronUp size="12" strokeWidth="3" /></ToggleButton>
                          </StopHead>
                          <StopBody>
                              <Bar $blue $width="62px" />
                              <Bar $width="85px" />
                              <Bar $blue $width="62px" />
                              <Bar $width="85px" />
                          </StopBody>
                          <StopHead $tall>
                              <StopBand>
                                  B
                                  <Lines $gap="10px">
                                      <Bar $width="141px" />
                                      <Bar $width="141px" />
                                  </Lines>
                                  <Bar $blue $width="76px" />
                                  <Bar $width="85px" />
                              </StopBand>
                              <ToggleButton type="button" aria-label="Collapse stop B"><FiChevronUp size="12" strokeWidth="3" /></ToggleButton>
                          </StopHead>
                          <StopBody>
                              <Bar $blue $width="62px" />
                              <Bar $width="85px" />
                              <Bar $blue $width="62px" />
                              <Bar $width="85px" />
                          </StopBody>
                      </Stops>
                  </Section>

                  <Section $bottom="33px">
                      <Title>App Information For Driver</Title>
                      <Lines $top="9px" $inset>
                          <Bar />
                          <Bar />
                      </Lines>
                  </Section>

                  <Section $top="28px" $bottom="35px">
                      <Title>Documents sent by driver</Title>
                      <Lines $top="9px" $inset>
                          <Bar $blue />
                          <Bar $blue />
                      </Lines>
                  </Section>

                  <Section $top="25px">
                      <CommentTop>
                          <Title>Comments</Title>
                          <Thread>
                              <ThreadLines>
                                  <ThreadRow>
                                      <Bar $width="26px" />
                                      <Bar $width="50px" />
                                  </ThreadRow>
                                  <Bar $width="14px" />
                              </ThreadLines>
                              <svg width="6" height="38" fill="#b01f26">
                                  <path d="M0 0H3V18L6 22L3 27V38H0Z" />
                              </svg>
                          </Thread>
                          <ScrollThumb $height="49px" />
                      </CommentTop>
                      <CommentForm onSubmit={(e) => e.preventDefault()}>
                          <Select aria-label="Comment type">
                              <option>General</option>
                          </Select>
                          <FiChevronDown size="13" strokeWidth="4" color="#111" />
                          <Input aria-label="Comment" placeholder="Enter your comment here..." />
                          <SendButton type="submit" aria-label="Send comment"><FiChevronRight size="13" strokeWidth="4" /></SendButton>
                      </CommentForm>
                  </Section>
              </Left>

              <Summary>
                  <SummaryBlock $width="350px">
                      <Title>Load Track Details</Title>
                      <Lines $top="23px" $gap="16px">
                          <SplitRow $columns="70fr 276fr">
                              <Bar />
                              <Bar />
                          </SplitRow>
                          <Bar $blue />
                      </Lines>
                  </SummaryBlock>
                  <SummaryBlock $width="207px">
                      <Title>Contact Support</Title>
                      <Lines $top="23px" $gap="16px">
                          <Bar />
                          <Bar />
                      </Lines>
                  </SummaryBlock>
              </Summary>
          </Dashboard>

          <RouteCard>
              <RouteHead>
                  <RouteTitle>Route Map</RouteTitle>
                  <SplitRow $columns="115px 354px">
                      <Bar />
                      <Bar $blue />
                  </SplitRow>
              </RouteHead>
              <MapBox>
                  <RouteMap />
                  <MapControls>
                      <MapButton type="button" aria-label="Weather"><MdCloud size="26" /></MapButton>
                      <MapButton type="button" aria-label="Traffic"><MdTraffic size="24" /></MapButton>
                  </MapControls>
              </MapBox>
          </RouteCard>
      </Page>
  )
}

export default App
